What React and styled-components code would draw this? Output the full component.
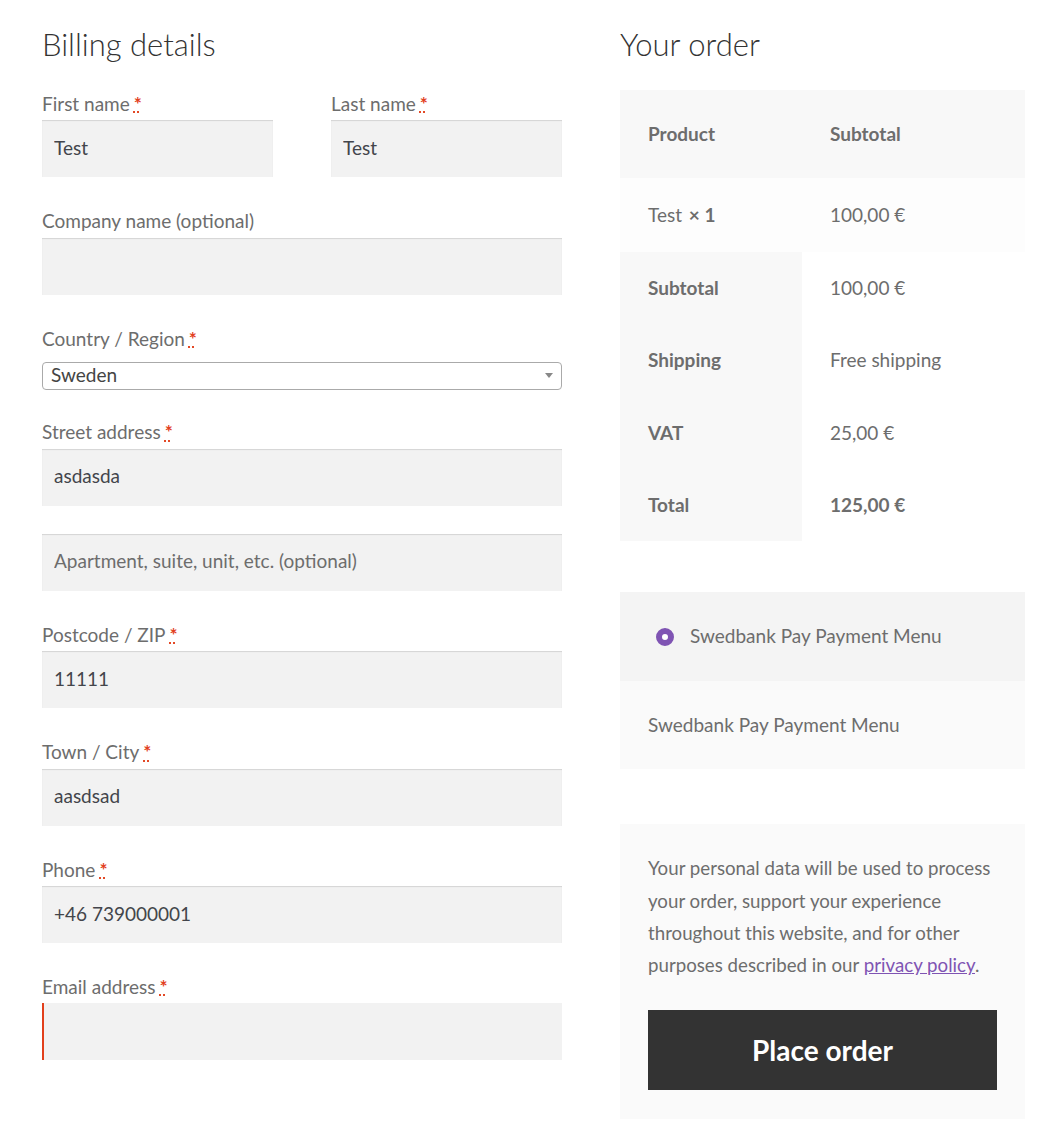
import React from "react";
import styled, { createGlobalStyle } from "styled-components";

const GlobalStyle = createGlobalStyle`
  body {
    margin: 0;
    background: #fff;
    font-family: Lato, "Liberation Sans", sans-serif;
    font-size: 19px;
    line-height: 1.618;
    color: #6d6d6d;
  }
  * { box-sizing: border-box; }
`;

const Page = styled.div`
  display: grid;
  grid-template-columns: 520px 405px;
  column-gap: 58px;
  padding: 18px 18px 12px 42px;
  width: 1043px;
`;

const Heading = styled.h3`
  margin: 0 0 ${(p) => (p.order ? "20px" : "18px")};
  font-size: 31px;
  font-weight: 300;
  line-height: 52px;
  color: #333;
`;

const Fields = styled.div`
  display: flex;
  flex-wrap: wrap;
  justify-content: space-between;
  row-gap: 28px;
`;

const Row = styled.div`
  width: ${(p) => (p.half ? "231px" : "100%")};
`;

const Label = styled.label`
  display: block;
  line-height: 32.4px;
  margin-bottom: ${(p) => (p.tight ? "6.6px" : "0")};
`;

const Req = styled.abbr`
  color: #e2401c;
  font-weight: 700;
  text-decoration: underline dotted;
  margin-left: 4px;
  cursor: help;
`;

const Input = styled.input`
  display: block;
  width: 100%;
  height: 57px;
  padding: 0 12px 3px;
  border: 0;
  outline: none;
  background: #f2f2f2;
  box-shadow: ${(p) =>
    p.invalid ? "inset 2px 0 0 #e2401c" : "inset 0 1px 1px rgba(0,0,0,0.125)"};
  font: inherit;
  color: #43454b;
  &::placeholder { color: #6d6d6d; opacity: 1; }
`;

const Select = styled.div`
  display: flex;
  align-items: center;
  justify-content: space-between;
  height: 28px;
  padding: 0 8px;
  border: 1px solid #aaa;
  border-radius: 4px;
  background: #fff;
  color: #444;
  font-size: 19px;
  margin-bottom: 26.6px;
`;

const Arrow = styled.span`
  width: 0;
  height: 0;
  border-left: 4px solid transparent;
  border-right: 4px solid transparent;
  border-top: 5px solid #888;
`;

const Table = styled.table`
  width: 100%;
  border-collapse: collapse;
  border-spacing: 0;
  margin-bottom: 51px;
  th, td {
    text-align: left;
    padding: 20px 28px;
    line-height: 32.4px;
    vertical-align: middle;
  }
  thead th {
    background: #f8f8f8;
    padding: 28px;
    font-weight: 700;
  }
  tbody td { background: #fdfdfd; padding: 20.5px 28px; }
  tfoot th { background: #f8f8f8; width: 182px; font-weight: 700; }
  tfoot td { background: #fff; }
`;

const Qty = styled.strong`
  margin-left: 2px;
  font-weight: 700;
`;

const Payment = styled.div`
  margin-bottom: 55px;
  line-height: 32.4px;
`;

const Method = styled.div`
  display: flex;
  align-items: center;
  gap: 16px;
  padding: 28px 28px 28px 36px;
  background: #f4f4f4;
`;

const Radio = styled.span`
  width: 18px;
  height: 18px;
  border-radius: 50%;
  border: 6px solid #7f54b3;
  background: #fff;
`;

const MethodBox = styled.div`
  padding: 28px;
  background: #fafafa;
`;

const Privacy = styled.div`
  padding: 28px 28px 29px;
  background: #fafafa;
  p {
    margin: 0 0 28px;
    font-size: 18.7px;
    line-height: 32.4px;
  }
  a { color: #7f54b3; text-decoration: underline; }
`;

const Button = styled.button`
  display: block;
  width: 100%;
  height: 80px;
  border: 0;
  background: #333;
  color: #fff;
  font-family: inherit;
  font-size: 28px;
  font-weight: 700;
  cursor: pointer;
`;

const address = [
  { label: "Postcode / ZIP", value: "11111" },
  { label: "Town / City", value: "aasdsad" },
  { label: "Phone", value: "+46 739000001" },
];

const App = () => (
  <>
    <GlobalStyle />
    <Page>
      <div>
        <Heading>Billing details</Heading>
        <Fields>
          <Row half>
            <Label>First name<Req title="required">*</Req></Label>
            <Input defaultValue="Test" />
          </Row>
          <Row half>
            <Label>Last name<Req title="required">*</Req></Label>
            <Input defaultValue="Test" />
          </Row>
          <Row>
            <Label>Company name (optional)</Label>
            <Input />
          </Row>
          <Row>
            <Label tight>Country / Region<Req title="required">*</Req></Label>
            <Select>
              Sweden
              <Arrow />
            </Select>
          </Row>
        </Fields>
        <Fields>
          <Row>
            <Label>Street address<Req title="required">*</Req></Label>
            <Input defaultValue="asdasda" />
          </Row>
          <Row>
            <Input placeholder="Apartment, suite, unit, etc. (optional)" />
          </Row>
          {address.map((f) => (
            <Row key={f.label}>
              <Label>{f.label}<Req title="required">*</Req></Label>
              <Input defaultValue={f.value} />
            </Row>
          ))}
          <Row>
            <Label>Email address<Req title="required">*</Req></Label>
            <Input invalid />
          </Row>
        </Fields>
      </div>
      <div>
        <Heading order>Your order</Heading>
        <Table>
          <thead>
            <tr>
              <th>Product</th>
              <th>Subtotal</th>
            </tr>
          </thead>
          <tbody>
            <tr>
              <td>Test <Qty>× 1</Qty></td>
              <td>100,00 €</td>
            </tr>
          </tbody>
          <tfoot>
            <tr><th>Subtotal</th><td>100,00 €</td></tr>
            <tr><th>Shipping</th><td>Free shipping</td></tr>
            <tr><th>VAT</th><td>25,00 €</td></tr>
            <tr><th>Total</th><td><strong>125,00 €</strong></td></tr>
          </tfoot>
        </Table>
        <Payment>
          <Method>
            <Radio />
            Swedbank Pay Payment Menu
          </Method>
          <MethodBox>Swedbank Pay Payment Menu</MethodBox>
        </Payment>
        <Privacy>
          <p>
            Your personal data will be used to process your order, support your
            experience throughout this website, and for other purposes described
            in our <a href="#privacy">privacy policy</a>.
          </p>
          <Button>Place order</Button>
        </Privacy>
      </div>
    </Page>
  </>
);

export default App;
